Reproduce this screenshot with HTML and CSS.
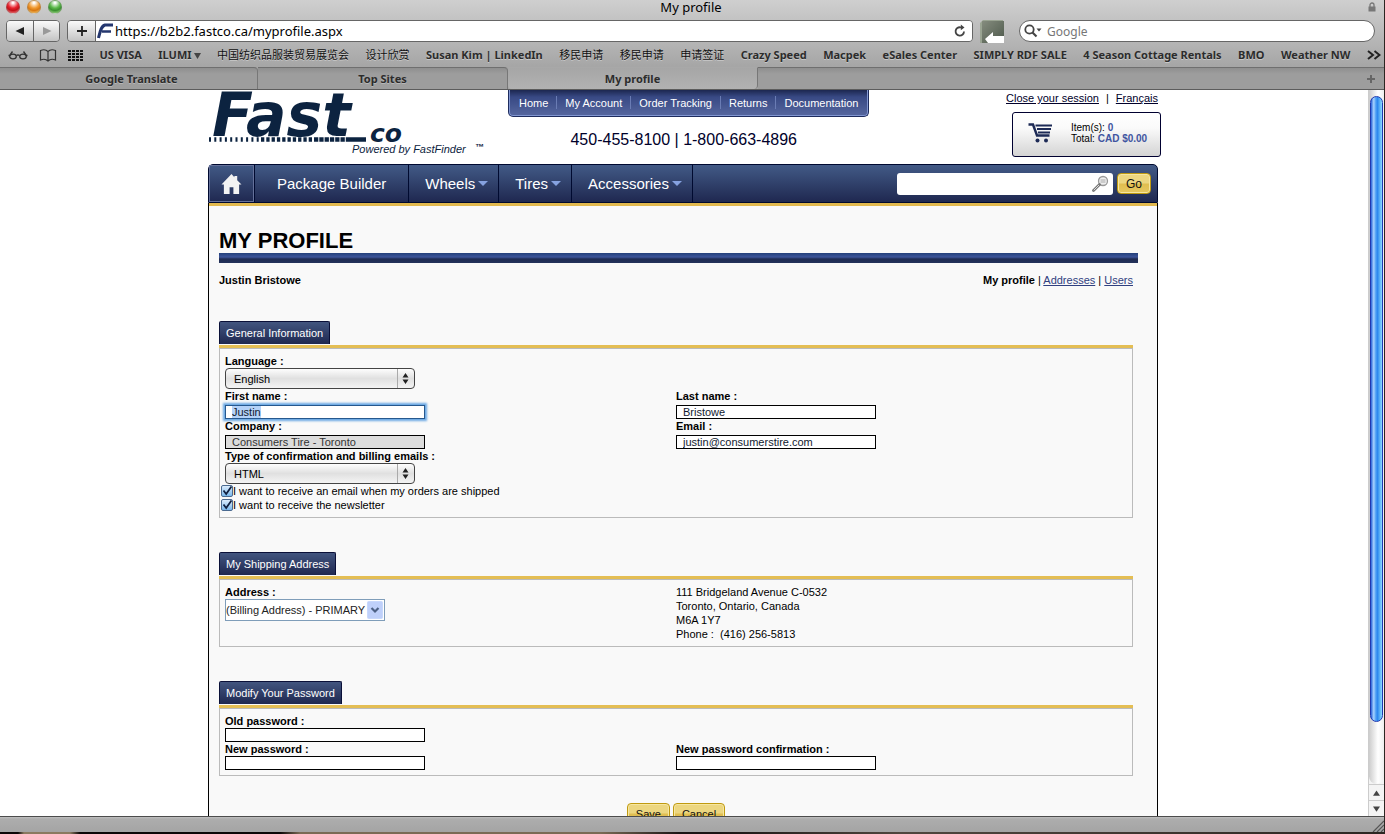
FILE: index.html
```
<!DOCTYPE html>
<html lang="en">
<head>
<meta charset="utf-8">
<title>My profile</title>
<link rel="stylesheet" href="styles.css">
</head>
<body>
<div class="window">
  <header class="chrome">
    <div class="titlebar">
      <div class="lights">
        <button class="light light-red" aria-label="Close"></button>
        <button class="light light-amber" aria-label="Minimize"></button>
        <button class="light light-green" aria-label="Zoom"></button>
      </div>
      <div class="window-title">My profile</div>
      <svg class="lock" viewBox="0 0 8 10" aria-hidden="true"><path d="M2 5V3a2 2 0 0 1 4 0v2" fill="none" stroke="#777" stroke-width="1.3"/><rect x="0.5" y="4.500" width="7" height="5" fill="#777"/></svg>
    </div>

    <div class="toolbar">
      <div class="history">
        <button class="tool" aria-label="Back"><svg viewBox="0 0 10 10"><path d="M9 1v8L0.500 5z" fill="#222"/></svg></button>
        <button class="tool" aria-label="Forward"><svg viewBox="0 0 10 10"><path d="M1 1v8l8.500-4z" fill="#999"/></svg></button>
      </div>
      <div class="location">
        <button class="tool tool-add" aria-label="Add bookmark"><svg viewBox="0 0 10 10"><path d="M5 0v10M0 5h10" stroke="#222" stroke-width="1.800"/></svg></button>
        <label class="url">
          <svg class="favicon" viewBox="0 0 17 16" aria-hidden="true"><path d="M1.500 15C3 9 4 3 8 2h8" fill="none" stroke="#24366e" stroke-width="3"/><path d="M5 8.500h9" stroke="#24366e" stroke-width="2.600"/></svg>
          <input type="text" aria-label="Address" value="https://b2b2.fastco.ca/myprofile.aspx">
          <svg class="reload" viewBox="0 0 12 12" aria-hidden="true"><path d="M10 6.500A4.200 4.200 0 1 1 6.500 2.300H8" fill="none" stroke="#444" stroke-width="1.800"/><path d="M6.800 -0.500L10.500 2.500 6.800 5.300z" fill="#444"/></svg>
        </label>
      </div>
      <svg class="page-thumb" viewBox="0 0 24 23" aria-hidden="true"><defs><linearGradient id="g" x2="1" y2="1"><stop offset="0" stop-color="#858c7e"/><stop offset="1" stop-color="#4c584a"/></linearGradient></defs><path d="M0 3l3-3h20v1H2v22H0z" fill="#9aa492"/><path d="M2 1h22v22H2z" fill="url(#g)"/><path d="M5 19l8-7v4h11v7H8z" fill="#fff"/></svg>
      <label class="google">
        <svg viewBox="0 0 18 14" aria-hidden="true"><circle cx="5.500" cy="5.500" r="4.200" fill="none" stroke="#444" stroke-width="1.800"/><path d="M8.500 8.500l4 4" stroke="#444" stroke-width="2.200"/><path d="M12.500 4.500h5l-2.500 3z" fill="#444"/></svg>
        <input type="text" aria-label="Search Google" placeholder="Google">
      </label>
    </div>

    <nav class="bookmarks" aria-label="Bookmarks">
      <div class="bookmark-icons">
        <svg class="glasses" viewBox="0 0 20 12" aria-hidden="true"><g fill="none" stroke="#333" stroke-width="1.300"><ellipse cx="5" cy="7.500" rx="3.300" ry="2.300"/><ellipse cx="15" cy="7.500" rx="3.300" ry="2.300"/><path d="M8.300 6.500q1.700-1 3.400 0M0.500 6.500h1.500M18 6.500h1.500M2 6l2.500-3.500M18 6l-2.500-3.500"/></g></svg>
        <svg class="book" viewBox="0 0 18 13" aria-hidden="true"><path d="M9 2.500C7 0.500 4 .5 1.500 1.500v9.500C4 10 7 10 9 12c2-2 5-2 7.500-1V1.500C14 .5 11 .5 9 2.500zV12" fill="none" stroke="#333" stroke-width="1.200"/></svg>
        <svg class="grid-icon" viewBox="0 0 15 11" aria-hidden="true"><path d="M0 1h15M0 4h15M0 7h15M0 10h15" stroke="#111" stroke-width="2" stroke-dasharray="3 1"/></svg>
      </div>
      <a href="#">US VISA</a>
      <a href="#">ILUMI<svg class="tick" viewBox="0 0 7 6" aria-hidden="true"><path d="M0 0h7L3.500 6z" fill="#444"/></svg></a>
      <a class="cjk" lang="zh" href="#">中国纺织品服装贸易展览会</a>
      <a class="cjk" lang="zh" href="#">设计欣赏</a>
      <a href="#">Susan Kim | LinkedIn</a>
      <a class="cjk" lang="zh" href="#">移民申请</a>
      <a class="cjk" lang="zh" href="#">移民申请</a>
      <a class="cjk" lang="zh" href="#">申请签证</a>
      <a href="#">Crazy Speed</a>
      <a href="#">Macpek</a>
      <a href="#">eSales Center</a>
      <a href="#">SIMPLY RDF SALE</a>
      <a href="#">4 Season Cottage Rentals</a>
      <a href="#">BMO</a>
      <a href="#">Weather NW</a>
      <svg class="more" viewBox="0 0 14 10" aria-hidden="true"><path d="M1 1l5 4-5 4M7.500 1l5 4-5 4" fill="none" stroke="#222" stroke-width="2"/></svg>
    </nav>

    <div class="tabs">
      <button class="tab tab-first">Google Translate</button>
      <button class="tab">Top Sites</button>
      <button class="tab tab-active">My profile</button>
      <div class="tab-rest"><svg viewBox="0 0 8 8" aria-hidden="true"><path d="M4 0v8M0 4h8" stroke="#666" stroke-width="2"/></svg></div>
    </div>
  </header>

  <div class="viewport">
    <div class="document">
      <div class="site">
        <div class="masthead">
          <svg class="logo" viewBox="208 90 278 68" role="img" aria-label="Fastco, powered by FastFinder">
            <text class="logo-fast" x="212" y="136">Fast</text>
            <g stroke="#0c2340">
              <path d="M209 139.500h52" stroke-width="4.500" stroke-dasharray="2 3.300"/>
              <path d="M261 139.500h53" stroke-width="4.500" stroke-dasharray="3.300 2"/>
              <path d="M314 139.500h36" stroke-width="4.500" stroke-dasharray="4.300 1"/>
              <path d="M350 139.500h16" stroke-width="4.500"/>
            </g>
            <text class="logo-co" x="370" y="142">co</text>
            <text class="logo-tag" x="352" y="153">Powered by FastFinder</text>
            <text class="logo-tm" x="475" y="150">™</text>
          </svg>
          <div class="mast-center">
            <nav class="menu" aria-label="Account">
              <a href="#">Home</a><a href="#">My Account</a><a href="#">Order Tracking</a><a href="#">Returns</a><a href="#">Documentation</a>
            </nav>
            <div class="phone">450-455-8100 | 1-800-663-4896</div>
          </div>
          <div class="mast-right">
            <div class="session"><a href="#">Close your session</a><span>|</span><a href="#">Français</a></div>
            <div class="cart">
              <svg viewBox="0 0 24 20" aria-hidden="true"><path d="M0.500 1.500h4.500l4 11h12.500" fill="none" stroke="#1d2a56" stroke-width="2.400"/><path d="M7.500 2.500H24M9 6h14M10 9.500h12" stroke="#1d2a56" stroke-width="2.200"/><circle cx="9.500" cy="17.500" r="2" fill="#1d2a56"/><circle cx="18" cy="17.500" r="2" fill="#1d2a56"/></svg>
              <div>Item(s): <b>0</b><br>Total: <b>CAD $0.00</b></div>
            </div>
          </div>
        </div>

        <nav class="mainnav" aria-label="Main">
          <a class="home" href="#" aria-label="Home"><svg viewBox="0 0 22 21"><path d="M11 0L0.500 11H3v10h6v-7h4v7h6V11h2.500L17 6.500V2h-3v1.500z" fill="#f2f2f2"/></svg></a>
          <a class="nav-package" href="#">Package Builder</a>
          <a href="#">Wheels<i class="caret"></i></a>
          <a href="#">Tires<i class="caret"></i></a>
          <a href="#">Accessories<i class="caret"></i></a>
          <form class="search">
            <label class="search-box">
              <input type="text" aria-label="Search">
              <svg viewBox="0 0 17 17" aria-hidden="true"><circle cx="11" cy="6" r="4.500" fill="#eee" stroke="#999" stroke-width="1.300"/><path d="M8.500 5h5M8.500 7h5" stroke="#aaa"/><path d="M7.500 9.500L1.500 15.500" stroke="#777" stroke-width="2.800" stroke-linecap="round"/><path d="M7 10L1.800 15.200" stroke="#ddd" stroke-width="1"/></svg>
            </label>
            <button type="button" class="gold go">Go</button>
          </form>
        </nav>

        <main class="content">
          <h1>MY PROFILE</h1>
          <div class="subhead">
            <b>Justin Bristowe</b>
            <div><b>My profile</b> | <a href="#">Addresses</a> | <a href="#">Users</a></div>
          </div>

          <section class="block">
            <h2>General Information</h2>
            <div class="panel">
              <div class="fields">
                <div class="field wide"><label for="lang">Language :</label><select id="lang" class="aqua"><option>English</option></select></div>
                <div class="field spaced"><label for="first">First name :</label><input id="first" class="focused" type="text" value="Justin"></div>
                <div class="field spaced"><label for="last">Last name :</label><input id="last" type="text" value="Bristowe"></div>
                <div class="field spaced"><label for="company">Company :</label><input id="company" type="text" value="Consumers Tire - Toronto" readonly></div>
                <div class="field spaced"><label for="email">Email :</label><input id="email" type="text" value="justin@consumerstire.com"></div>
                <div class="field wide"><label for="kind">Type of confirmation and billing emails :</label><select id="kind" class="aqua"><option>HTML</option></select></div>
              </div>
              <label class="check"><input type="checkbox" checked>I want to receive an email when my orders are shipped</label>
              <label class="check"><input type="checkbox" checked>I want to receive the newsletter</label>
            </div>
          </section>

          <section class="block">
            <h2>My Shipping Address</h2>
            <div class="panel">
              <div class="fields">
                <div class="field"><label for="address">Address :</label><select id="address" class="xp"><option>(Billing Address) - PRIMARY</option></select></div>
                <address>111 Bridgeland Avenue C-0532<br>Toronto, Ontario, Canada<br>M6A 1Y7<br>Phone :&nbsp; (416) 256-5813</address>
              </div>
            </div>
          </section>

          <section class="block">
            <h2>Modify Your Password</h2>
            <div class="panel">
              <div class="fields">
                <div class="field wide"><label for="old">Old password :</label><input id="old" type="password"></div>
                <div class="field"><label for="new">New password :</label><input id="new" type="password"></div>
                <div class="field"><label for="again">New password confirmation :</label><input id="again" type="password"></div>
              </div>
            </div>
          </section>

          <div class="actions">
            <button type="button" class="gold">Save</button>
            <button type="button" class="gold">Cancel</button>
          </div>
        </main>
      </div>
    </div>

    <div class="scrollbar" aria-hidden="true">
      <div class="track"><div class="thumb"></div></div>
      <div class="arrow"><svg viewBox="0 0 8 6"><path d="M4 0l4 6H0z" fill="#444"/></svg></div>
      <div class="arrow"><svg viewBox="0 0 8 6"><path d="M4 6L0 0h8z" fill="#444"/></svg></div>
    </div>
  </div>

  <footer class="status"><svg viewBox="0 0 12 12" aria-hidden="true"><path d="M1 12L12 1M5 12l7-7M9 12l3-3" stroke="#555" stroke-width="1.200"/></svg></footer>
</div>
</body>
</html>
```
FILE: styles.css
```
* { box-sizing: border-box; }

body {
  margin: 0;
  height: 100vh;
  overflow: hidden;
  padding: 0 1px 2px 0;
  background: linear-gradient(90deg, #0a0606 0 18px, #8a7a60 24px 70px, #0a0606 80px 280px, #7a6a55 300px 600px, #1a1414 680px 720px, #50463e 900px, #2c2622);
  font: 11px/14px "Liberation Sans", Arial, sans-serif;
  color: #000;
}

input, select, button { font: inherit; color: inherit; margin: 0; }

.window { height: 100%; display: flex; flex-direction: column; background: #fff; }

/* Browser chrome */
.chrome {
  flex: none;
  font-family: "Noto Sans", "Noto Sans CJK SC", sans-serif;
  background: linear-gradient(#cfcfcf, #a6a6a6 66px);
}

.titlebar { display: flex; height: 20px; align-items: flex-start; justify-content: space-between; padding: 0 8px 0 6px; }
.lights { display: flex; gap: 7px; width: 62px; }
.light { width: 14px; height: 14px; padding: 0; border: 1px solid #7775; border-radius: 50%; }
.light-red { background: radial-gradient(circle at 50% 15%, #fff 5%, #e8222e 45%, #c01018 65%, #ff9a9a); }
.light-amber { background: radial-gradient(circle at 50% 15%, #fff 5%, #f09a30 45%, #d87810 65%, #ffe08a); }
.light-green { background: radial-gradient(circle at 50% 15%, #fff 5%, #5ab848 45%, #3a9030 65%, #b8f09a); }
.window-title { font-size: 13px; line-height: 15px; }
.lock { width: 8px; height: 10px; margin: 2px 0 0 54px; }

.toolbar { display: flex; height: 23px; padding: 0 9px 0 6px; align-items: flex-start; }
.history { display: flex; margin-right: 7px; border: 1px solid #666; border-radius: 4px; overflow: hidden; }
.tool { display: grid; place-items: center; width: 26px; height: 20px; padding: 0; border: 0; background: linear-gradient(#fafafa, #c4c4c4); }
.tool + .tool { border-left: 1px solid #666; }
.tool svg { width: 10px; height: 10px; }
.location { display: flex; flex: 1; min-width: 0; border: 1px solid #666; border-radius: 4px; overflow: hidden; }
.tool-add { width: 28px; border-right: 1px solid #666; }
.url { display: flex; flex: 1; min-width: 0; align-items: center; background: #fff; padding: 0 6px 0 1px; }
.favicon { width: 17px; height: 16px; }
.url input, .google input { flex: 1; min-width: 0; height: 20px; padding: 0; border: 0; outline: 0; background: none; font-size: 12px; }
.url input { color: #000; font-size: 13px; padding-left: 1px; }
.reload { width: 12px; height: 12px; overflow: visible; }
.page-thumb { width: 24px; height: 23px; margin: 0 15px 0 7px; }
.google { display: flex; align-items: center; gap: 5px; width: 356px; height: 22px; padding: 0 8px 0 4px; border: 1px solid #666; border-radius: 11px; background: #fff; }
.google svg { width: 18px; height: 14px; }
.google input::placeholder { color: #777; opacity: 1; }

.bookmarks {
  display: flex;
  align-items: center;
  justify-content: space-between;
  height: 24px;
  padding: 0 3px 0 8px;
  font-size: 11px;
  font-weight: 700;
  white-space: nowrap;
}
.bookmarks a { color: #2c2c2c; text-decoration: none; text-shadow: 0 1px #c8c8c8; }
.bookmarks .cjk { font-weight: 400; color: #111; }
.bookmark-icons { display: flex; align-items: center; gap: 11px; }
.glasses { width: 20px; height: 12px; }
.book { width: 18px; height: 13px; }
.grid-icon { width: 15px; height: 11px; }
.tick { width: 7px; height: 6px; margin-left: 2px; }
.more { width: 14px; height: 10px; }

.tabs { display: flex; height: 23px; font-size: 11px; font-weight: 700; border-bottom: 1px solid #5c5c5c; }
.tab { width: 250px; padding: 0; border: 0; border-top: 1px solid #6f6f6f; border-right: 1px solid #777; border-radius: 0 4px 0 0; background: linear-gradient(#8f8f8f, #9d9d9d 6px); color: #2c2c2c; text-shadow: 0 1px #b8b8b8; }
.tab-first { width: 258px; padding-left: 6px; }
.tab-active { border-top-color: #a8a8a8; border-radius: 0 0 4px 4px; background: linear-gradient(#a6a6a6, #b2b2b2); }
.tab-rest { flex: 1; display: flex; align-items: center; justify-content: flex-end; padding-right: 9px; border-top: 1px solid #6f6f6f; background: linear-gradient(#8f8f8f, #9d9d9d 6px); }
.tab-rest svg { width: 8px; height: 8px; }

/* Viewport */
.viewport { flex: 1; min-height: 0; display: flex; }
.document { flex: 1; min-width: 0; overflow: hidden; }
.scrollbar { display: flex; flex-direction: column; width: 16px; border-left: 1px solid #ccc; background: #f4f4f4; }
.track { flex: 1; padding: 6px 1px 0; background: linear-gradient(90deg, #ccc, #fff 60%, #eee); border-radius: 0 0 8px 8px; }
.thumb { height: 91%; border: 1px solid #2038b0; border-radius: 7px; background: linear-gradient(90deg, #2a62d8, #a8d4ff 25%, #4a9cf4 45%, #2d88ee 60%, #8cdcff); }
.arrow { display: grid; place-items: center; height: 16px; border-top: 1px solid #ccc; }
.arrow svg { width: 7px; height: 6px; }

.status { flex: none; display: flex; justify-content: flex-end; align-items: flex-end; height: 16px; border-top: 1px solid #4c4c4c; background: linear-gradient(#c0c0c0, #adadad 2px, #a4a4a4); }
.status svg { width: 12px; height: 12px; }

/* Site */
.site { display: flex; flex-direction: column; max-width: 952px; min-height: 100%; margin: 0 auto; padding-right: 2px; }
.masthead { display: flex; height: 74px; gap: 22px; margin-right: -3px; }
.logo { width: 278px; height: 68px; }
.logo text { fill: #0c2340; }
.logo-fast { font: italic bold 60px "DejaVu Sans", sans-serif; }
.logo-co { font: italic bold 25px "DejaVu Sans", sans-serif; }
.logo-tag { font: italic 11px "Liberation Sans", sans-serif; }
.logo-tm { font: bold 9px "Liberation Sans", sans-serif; }

.mast-center { display: flex; flex-direction: column; align-items: center; gap: 14px; }
.menu { display: flex; height: 27px; padding: 0 2px; border: 1px solid #1e2c5e; border-top: 0; border-radius: 0 0 5px 5px; background: linear-gradient(#1c2750, #384984 7px, #56679f); box-shadow: inset 0 -1px #8297d2, inset 1px 0 #8297d2, inset -1px 0 #8297d2; }
.menu a { margin: 6px 0 7px; padding: 0 8px; color: #fff; text-decoration: none; }
.menu a + a { border-left: 1px solid #6a7cb4; }
.phone { padding-right: 10px; font-size: 16px; line-height: 18px; color: #00002a; }

.mast-right { display: flex; flex-direction: column; align-items: flex-end; gap: 7px; margin-left: auto; padding-top: 1px; }
.session { display: flex; gap: 7px; padding-right: 3px; }
.session a { color: #00002a; }
.cart { display: flex; align-items: center; gap: 19px; width: 149px; height: 45px; padding: 0 9px 4px 15px; border: 1px solid #000030; border-radius: 3px; background: linear-gradient(#fff, #fafafa 35%, #d4d4d4); font-size: 10px; line-height: 11px; white-space: nowrap; }
.cart svg { width: 24px; height: 20px; }
.cart b { color: #4054a0; }

.mainnav { display: flex; height: 39px; border: 1px solid #000a30; border-radius: 5px 5px 0 0; background: linear-gradient(#425a86, #1f2850); }
.mainnav > a { display: flex; align-items: center; padding: 0 10px 0 16px; border-right: 1px solid #000a30; color: #fff; font-size: 15px; line-height: 18px; text-decoration: none; }
.mainnav > .home { padding: 0 11px; border: 1px solid #65719a; box-shadow: 1px 0 #000a30; margin-right: 1px; }
.home svg { width: 21px; height: 20px; }
.mainnav > .nav-package { padding: 0 22px; }
.caret { margin-left: 3px; border: 5px solid transparent; border-top-color: #86a2e0; border-bottom: 0; }
.search { display: flex; align-items: center; gap: 4px; margin-left: auto; padding-right: 6px; }
.search-box { display: flex; align-items: center; width: 216px; height: 22px; padding: 0 4px; border-radius: 3px; background: #fff; }
.search-box input { flex: 1; min-width: 0; border: 0; outline: 0; background: none; }
.search-box svg { width: 17px; height: 17px; }

.gold { height: 21px; padding: 0 8px; border: 1px solid #c09a10; border-radius: 4px; box-shadow: inset 0 0 0 1px #f6e6a0; background: linear-gradient(#ecd680 45%, #e0be50 55%, #e6c860); color: #111; }
.go { font-size: 12px; }

.content { flex: 1; padding: 26px 19px 0 10px; border: solid #000; border-width: 0 1px; background: #f9f9f9; box-shadow: inset 0 3px #e2b94e; }
h1 { margin: 0; padding-bottom: 10px; font-size: 22px; line-height: 24px; background: linear-gradient(#24407a, #3c549a 40%, #1f2b52 60%, #24335c) bottom / 100% 10px no-repeat; }
.subhead { display: flex; justify-content: space-between; margin: 10px 5px 34px 0; }
.subhead a { color: #304080; }

.block { margin: 0 5px 34px 0; }
h2 { display: table; margin: 0; padding: 4px 6px; border: 1px solid #0a1038; border-bottom: 0; border-radius: 2px 2px 0 0; background: linear-gradient(#42557f, #1f2850); color: #fff; font-size: 11px; font-weight: normal; line-height: 14px; height: 23px; }
.panel { padding: 5px; border: 1px solid #bbb; box-shadow: 0 -3px #e4be54; margin-top: 4px; }
.fields { display: grid; grid-template-columns: 1fr 1fr; }
.wide { grid-column: 1 / -1; }
.field label { display: block; font-weight: bold; }
.field input { display: block; width: 200px; height: 14px; padding: 0 6px; border: 1px solid #000; background: #fff; color: #111a30; }
.spaced input { margin-top: 2px; }
.field input[readonly] { background: #dcdcdc; color: #333; }
.field .focused { border-color: #26588e; outline: 0; box-shadow: 0 0 2px 2px #6aa8e4; background: linear-gradient(#b4d2f8, #b4d2f8) 6px 0 / 29px 100% no-repeat #fff; }

select { display: block; appearance: none; outline: 0; }
.aqua { width: 190px; height: 21px; padding: 0 24px 0 8px; border: 1px solid #444; border-radius: 4px; background: url("data:image/svg+xml,%3Csvg xmlns='http://www.w3.org/2000/svg' width='17' height='19'%3E%3Cpath d='M.5 0v19' stroke='%23aaa'/%3E%3Cpath d='M8.500 4l3 4.500h-6zM8.500 15l3-4.500h-6z' fill='%23222'/%3E%3C/svg%3E") right center no-repeat, linear-gradient(#fdfdfd, #e0e0e0 50%, #f4f4f4); }
.xp { width: 160px; height: 22px; padding: 0; border: 1px solid #7f9db9; background: url("data:image/svg+xml,%3Csvg xmlns='http://www.w3.org/2000/svg' width='17' height='20'%3E%3Crect x='.5' y='1.500' width='15' height='17' rx='1' fill='%23bfd0fa' stroke='%23c8d8fc'/%3E%3Cpath d='M4.500 8l3.500 3.500L11.500 8' fill='none' stroke='%234d6185' stroke-width='2.200'/%3E%3C/svg%3E") right center no-repeat #fff; color: #222; }
address { font-style: normal; }

.check { display: flex; align-items: center; height: 14px; margin-left: -4px; }
.check input { appearance: none; width: 12px; height: 12px; border: 1px solid #4a6a90; border-radius: 2px; background: url("data:image/svg+xml,%3Csvg xmlns='http://www.w3.org/2000/svg' viewBox='0 0 10 10'%3E%3Cpath d='M1.500 4.500L4.200 8 9.500.5' fill='none' stroke='%23102040' stroke-width='1.800'/%3E%3C/svg%3E"), linear-gradient(#dcecfc, #7ab8ec); }

.actions { display: flex; justify-content: center; gap: 3px; margin: -7px 5px 0 0; }
```
